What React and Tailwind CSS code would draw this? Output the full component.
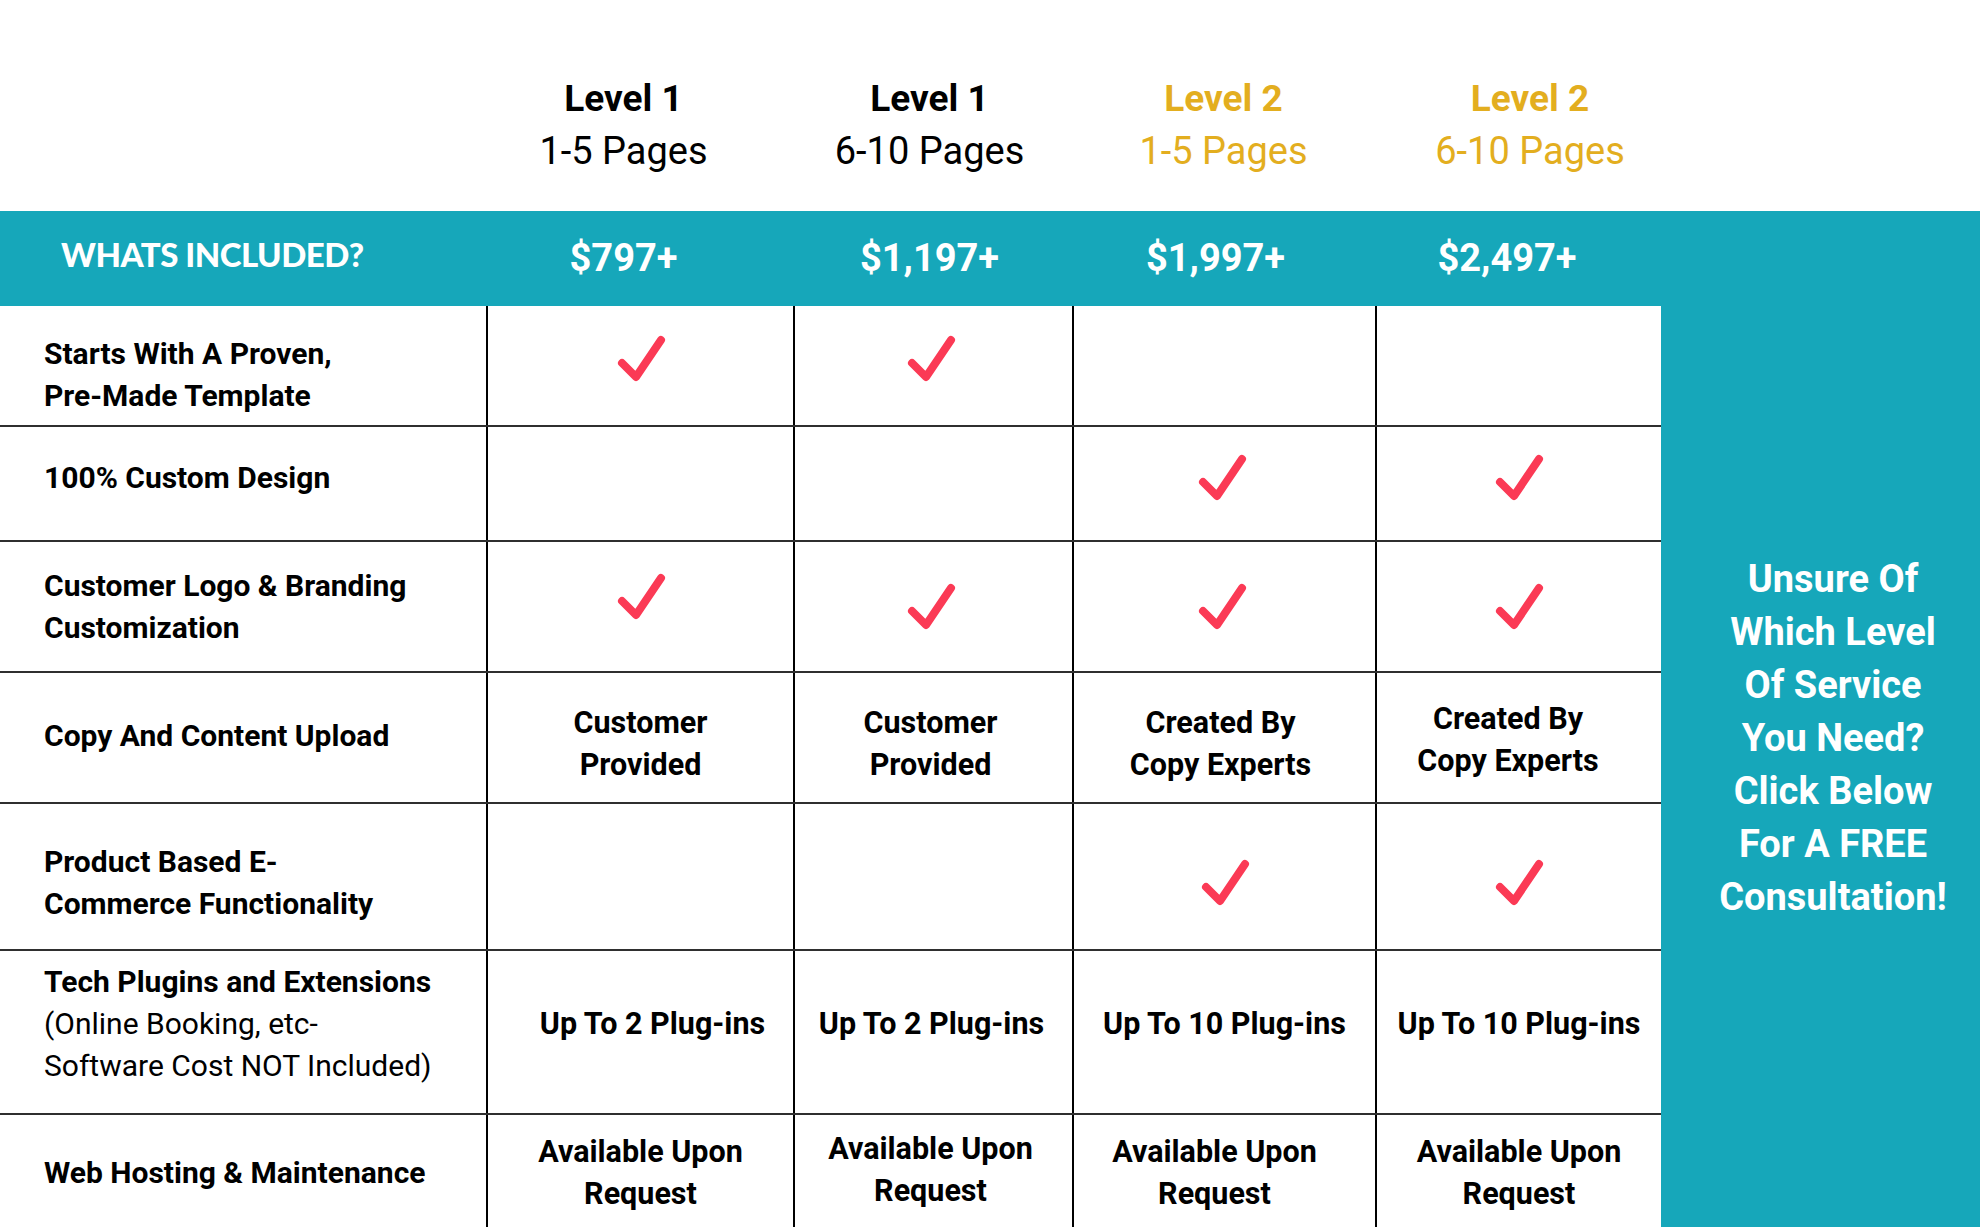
import React from "react";

const TEAL = "bg-[#16a7ba]";

function Check() {
  return (
    <svg width="50" height="50" viewBox="0 0 50 50" fill="none">
      <path d="M6 29 L20 43 L45 6" stroke="#fb3a55" strokeWidth="8" strokeLinecap="round" strokeLinejoin="round" />
    </svg>
  );
}

const cols = "grid grid-cols-[486px_307px_279px_303px_286px]";

const rows = [
  {
    h: "h-[121px]",
    lc: "pt-[18px]",
    label: ["Starts With A Proven,", "Pre-Made Template"],
    cells: ["check", "check", null, null],
    cc: ["mb-[14px]", "mb-[14px] pr-[6px]", "", ""],
  },
  {
    h: "h-[115px]",
    lc: "pb-[12px]",
    label: ["100% Custom Design"],
    cells: [null, null, "check", "check"],
    cc: ["", "", "mb-[12px] pr-[6px]", "mb-[12px]"],
  },
  {
    h: "h-[131px]",
    lc: "",
    label: ["Customer Logo & Branding", "Customization"],
    cells: ["check", "check", "check", "check"],
    cc: ["mb-[20px]", "pr-[6px]", "pr-[6px]", ""],
  },
  {
    h: "h-[131px]",
    lc: "pb-[4px]",
    label: ["Copy And Content Upload"],
    cells: [["Customer", "Provided"], ["Customer", "Provided"], ["Created By", "Copy Experts"], ["Created By", "Copy Experts"]],
    cc: ["pt-[12px]", "pt-[12px] pr-[6px]", "pt-[12px] pr-[8px]", "pt-[4px] pr-[22px]"],
  },
  {
    h: "h-[147px]",
    lc: "pt-[12px]",
    label: ["Product Based E-", "Commerce Functionality"],
    cells: [null, null, "check", "check"],
    cc: ["", "", "mt-[12px]", "mt-[12px]"],
  },
  {
    h: "h-[164px]",
    lc: "pb-[16px]",
    label: "tech",
    cells: [["Up To 2 Plug-ins"], ["Up To 2 Plug-ins"], ["Up To 10 Plug-ins"], ["Up To 10 Plug-ins"]],
    cc: ["pb-[16px] pl-[24px]", "pb-[16px] pr-[4px]", "pb-[16px]", "pb-[16px]"],
  },
  {
    h: "h-[116px]",
    lc: "",
    label: ["Web Hosting & Maintenance"],
    cells: [["Available Upon", "Request"], ["Available Upon", "Request"], ["Available Upon", "Request"], ["Available Upon", "Request"]],
    cc: ["", "pb-[6px] pr-[6px]", "pr-[20px]", ""],
    last: true,
  },
];

export default function App() {
  return (
    <div className="w-[1980px] h-[1227px] overflow-hidden bg-white font-['Roboto',sans-serif] text-black">
      {/* Header */}
      <div className={`${cols} h-[211px] items-start pt-[72px]`}>
        <div />
        {[
          ["Level 1", "1-5 Pages", "text-black", "pr-[32px]"],
          ["Level 1", "6-10 Pages", "text-black", "pr-[6px]"],
          ["Level 2", "1-5 Pages", "text-[#e3ae1f]", ""],
          ["Level 2", "6-10 Pages", "text-[#e3ae1f]", "pl-[24px]"],
        ].map(([a, b, c, p], i) => (
          <div key={i} className={`flex flex-col items-center ${c} ${p} leading-[53px]`}>
            <div className="text-[37px] font-bold">{a}</div>
            <div className="text-[38px] font-normal">{b}</div>
          </div>
        ))}
      </div>

      <div className={`${TEAL}`}>
        {/* Band */}
        <div className={`${cols} h-[95px] items-center text-white`}>
          <div className="pl-[61px] font-['Lato',sans-serif] font-black text-[33px] tracking-[-0.5px] pb-[8px]">WHATS INCLUDED?</div>
          <div className="text-center text-[38px] font-bold pr-[32px]">$797+</div>
          <div className="text-center text-[38px] font-bold pr-[6px]">$1,197+</div>
          <div className="text-center text-[38px] font-bold pr-[16px]">$1,997+</div>
          <div className="text-center text-[38px] font-bold pr-[22px]">$2,497+</div>
        </div>

        <div className="flex">
          <div className="w-[1661px] bg-white">
            {rows.map((r, ri) => (
              <div key={ri} className={`${cols} ${r.h} ${r.last ? "" : "border-b-[2px] border-[#2f2f2f]"}`}>
                <div className={`flex flex-col justify-center pl-[44px] text-[30px] leading-[42px] ${r.lc}`}>
                  {r.label === "tech" ? (
                    <>
                      <div className="font-bold">Tech Plugins and Extensions</div>
                      <div className="font-normal">(Online Booking, etc-</div>
                      <div className="font-normal">Software Cost NOT Included)</div>
                    </>
                  ) : (
                    r.label.map((l, i) => (
                      <div key={i} className="font-bold">
                        {l}
                      </div>
                    ))
                  )}
                </div>
                {r.cells.map((c, ci) => (
                  <div
                    key={ci}
                    className="border-l-[2px] border-black flex flex-col items-center justify-center text-center text-[30.5px] leading-[42px] font-bold"
                  >
                    {c === "check" ? (
                      <div className={r.cc[ci]}>
                        <Check />
                      </div>
                    ) : c ? (
                      <div className={r.cc[ci]}>
                        {c.map((t, ti) => (
                          <div key={ti}>{t}</div>
                        ))}
                      </div>
                    ) : null}
                  </div>
                ))}
              </div>
            ))}
          </div>
          <div className="flex-1 flex flex-col items-center pt-[247px] pl-[25px] text-white text-[38px] font-bold leading-[53px] text-center">
            <div>Unsure Of</div>
            <div>Which Level</div>
            <div>Of Service</div>
            <div>You Need?</div>
            <div>Click Below</div>
            <div>For A FREE</div>
            <div>Consultation!</div>
          </div>
        </div>
      </div>
    </div>
  );
}
